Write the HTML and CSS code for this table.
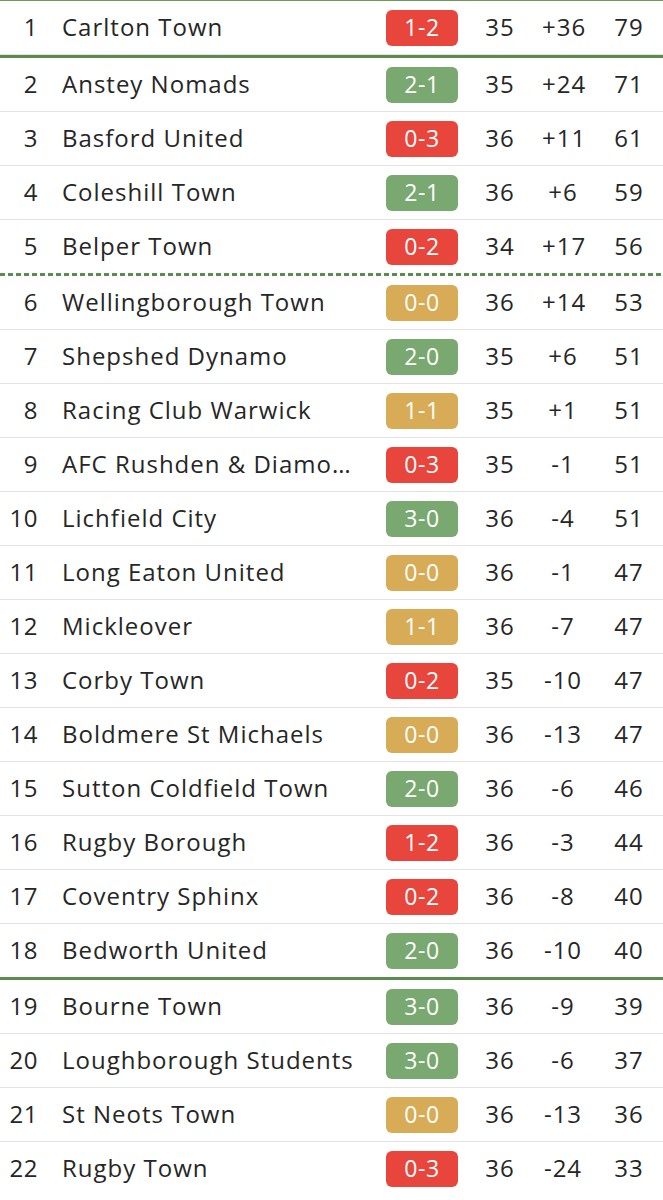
FILE: index.html
```html
<!DOCTYPE html>
<html lang="en">
<head>
<meta charset="utf-8">
<title>League Table</title>
<link rel="stylesheet" href="styles.css">
</head>
<body>
<div class="table">
  <div class="row"><span class="pos">1</span><span class="name">Carlton Town</span><span class="res loss">1-2</span><span class="num">35</span><span class="num gd">+36</span><span class="num pts">79</span></div>
  <div class="sep solid"></div>
  <div class="row"><span class="pos">2</span><span class="name">Anstey Nomads</span><span class="res win">2-1</span><span class="num">35</span><span class="num gd">+24</span><span class="num pts">71</span></div>
  <div class="row"><span class="pos">3</span><span class="name">Basford United</span><span class="res loss">0-3</span><span class="num">36</span><span class="num gd">+11</span><span class="num pts">61</span></div>
  <div class="row"><span class="pos">4</span><span class="name">Coleshill Town</span><span class="res win">2-1</span><span class="num">36</span><span class="num gd">+6</span><span class="num pts">59</span></div>
  <div class="row last"><span class="pos">5</span><span class="name">Belper Town</span><span class="res loss">0-2</span><span class="num">34</span><span class="num gd">+17</span><span class="num pts">56</span></div>
  <div class="sep dashed"></div>
  <div class="row"><span class="pos">6</span><span class="name">Wellingborough Town</span><span class="res draw">0-0</span><span class="num">36</span><span class="num gd">+14</span><span class="num pts">53</span></div>
  <div class="row"><span class="pos">7</span><span class="name">Shepshed Dynamo</span><span class="res win">2-0</span><span class="num">35</span><span class="num gd">+6</span><span class="num pts">51</span></div>
  <div class="row"><span class="pos">8</span><span class="name">Racing Club Warwick</span><span class="res draw">1-1</span><span class="num">35</span><span class="num gd">+1</span><span class="num pts">51</span></div>
  <div class="row"><span class="pos">9</span><span class="name">AFC Rushden &amp; Diamonds</span><span class="res loss">0-3</span><span class="num">35</span><span class="num gd">-1</span><span class="num pts">51</span></div>
  <div class="row"><span class="pos">10</span><span class="name">Lichfield City</span><span class="res win">3-0</span><span class="num">36</span><span class="num gd">-4</span><span class="num pts">51</span></div>
  <div class="row"><span class="pos">11</span><span class="name">Long Eaton United</span><span class="res draw">0-0</span><span class="num">36</span><span class="num gd">-1</span><span class="num pts">47</span></div>
  <div class="row"><span class="pos">12</span><span class="name">Mickleover</span><span class="res draw">1-1</span><span class="num">36</span><span class="num gd">-7</span><span class="num pts">47</span></div>
  <div class="row"><span class="pos">13</span><span class="name">Corby Town</span><span class="res loss">0-2</span><span class="num">35</span><span class="num gd">-10</span><span class="num pts">47</span></div>
  <div class="row"><span class="pos">14</span><span class="name">Boldmere St Michaels</span><span class="res draw">0-0</span><span class="num">36</span><span class="num gd">-13</span><span class="num pts">47</span></div>
  <div class="row"><span class="pos">15</span><span class="name">Sutton Coldfield Town</span><span class="res win">2-0</span><span class="num">36</span><span class="num gd">-6</span><span class="num pts">46</span></div>
  <div class="row"><span class="pos">16</span><span class="name">Rugby Borough</span><span class="res loss">1-2</span><span class="num">36</span><span class="num gd">-3</span><span class="num pts">44</span></div>
  <div class="row"><span class="pos">17</span><span class="name">Coventry Sphinx</span><span class="res loss">0-2</span><span class="num">36</span><span class="num gd">-8</span><span class="num pts">40</span></div>
  <div class="row last"><span class="pos">18</span><span class="name">Bedworth United</span><span class="res win">2-0</span><span class="num">36</span><span class="num gd">-10</span><span class="num pts">40</span></div>
  <div class="sep solid"></div>
  <div class="row"><span class="pos">19</span><span class="name">Bourne Town</span><span class="res win">3-0</span><span class="num">36</span><span class="num gd">-9</span><span class="num pts">39</span></div>
  <div class="row"><span class="pos">20</span><span class="name">Loughborough Students</span><span class="res win">3-0</span><span class="num">36</span><span class="num gd">-6</span><span class="num pts">37</span></div>
  <div class="row"><span class="pos">21</span><span class="name">St Neots Town</span><span class="res draw">0-0</span><span class="num">36</span><span class="num gd">-13</span><span class="num pts">36</span></div>
  <div class="row last"><span class="pos">22</span><span class="name">Rugby Town</span><span class="res loss">0-3</span><span class="num">36</span><span class="num gd">-24</span><span class="num pts">33</span></div>
</div>
</body>
</html>
```
FILE: styles.css
```css
html, body {
  margin: 0;
  padding: 0;
  background: #ffffff;
}
body {
  font-family: "Open Sans", "Noto Sans", sans-serif;
  color: #262626;
  width: 663px;
}
.table {
  border-top: 1px solid #6a9a5e;
}
.row {
  display: grid;
  grid-template-columns: 38px minmax(0, 1fr) 72px 84px 42px 79px;
  align-items: center;
  height: 53px;
  border-bottom: 1px solid #e3e3e3;
  font-size: 24px;
  letter-spacing: 1px;
  line-height: 32px;
}
.row.last {
  border-bottom: none;
}
.pos,
.name,
.num {
  padding-bottom: 2px;
}
.pos {
  text-align: right;
  letter-spacing: 0.5px;
}
.name {
  padding-left: 24px;
  padding-right: 22px;
  white-space: nowrap;
  overflow: hidden;
  text-overflow: ellipsis;
}
.res {
  height: 36px;
  border-radius: 6px;
  color: #ffffff;
  display: flex;
  align-items: center;
  justify-content: center;
  font-size: 23px;
  letter-spacing: 0.6px;
  padding-bottom: 1px;
  box-sizing: border-box;
}
.win { background: #79a871; }
.loss { background: #e8463d; }
.draw { background: #d8ac57; }
.num {
  text-align: center;
  white-space: nowrap;
}
.pts {
  padding-left: 11px;
}
.sep {
  height: 3px;
}
.sep.solid {
  background: #5b8b4e;
}
.sep.dashed {
  background: repeating-linear-gradient(to right, #5b8b4e 0 5px, transparent 5px 8px);
}
```
